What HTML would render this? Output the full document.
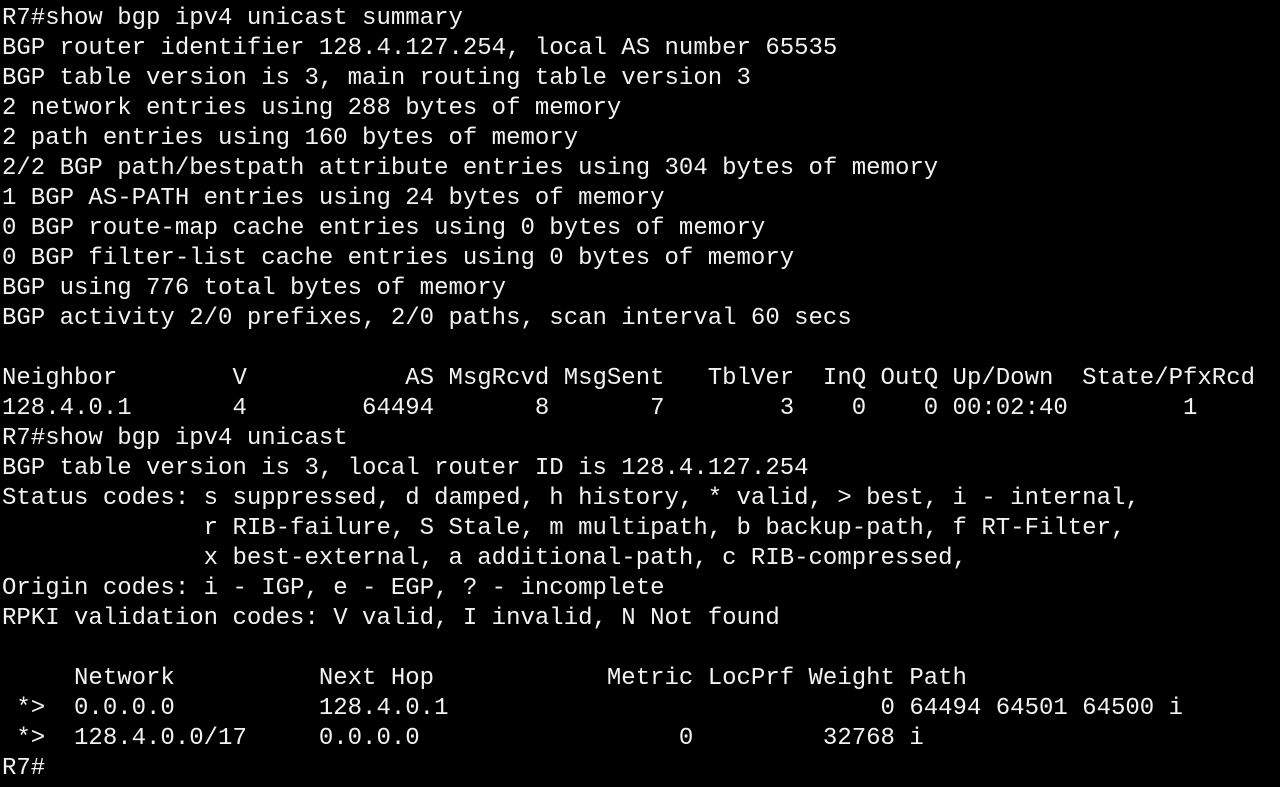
<!DOCTYPE html>
<html><head><meta charset="utf-8"><style>
html,body{margin:0;padding:0;background:#000;width:1280px;height:787px;overflow:hidden}
pre{margin:0;padding:4px 0 0 2px;font-family:"Liberation Mono",monospace;font-size:24px;line-height:30px;color:#f2f2f2;white-space:pre}
</style></head><body><pre>R7#show bgp ipv4 unicast summary
BGP router identifier 128.4.127.254, local AS number 65535
BGP table version is 3, main routing table version 3
2 network entries using 288 bytes of memory
2 path entries using 160 bytes of memory
2/2 BGP path/bestpath attribute entries using 304 bytes of memory
1 BGP AS-PATH entries using 24 bytes of memory
0 BGP route-map cache entries using 0 bytes of memory
0 BGP filter-list cache entries using 0 bytes of memory
BGP using 776 total bytes of memory
BGP activity 2/0 prefixes, 2/0 paths, scan interval 60 secs

Neighbor        V           AS MsgRcvd MsgSent   TblVer  InQ OutQ Up/Down  State/PfxRcd
128.4.0.1       4        64494       8       7        3    0    0 00:02:40        1
R7#show bgp ipv4 unicast
BGP table version is 3, local router ID is 128.4.127.254
Status codes: s suppressed, d damped, h history, * valid, &gt; best, i - internal,
              r RIB-failure, S Stale, m multipath, b backup-path, f RT-Filter,
              x best-external, a additional-path, c RIB-compressed,
Origin codes: i - IGP, e - EGP, ? - incomplete
RPKI validation codes: V valid, I invalid, N Not found

     Network          Next Hop            Metric LocPrf Weight Path
 *&gt;  0.0.0.0          128.4.0.1                              0 64494 64501 64500 i
 *&gt;  128.4.0.0/17     0.0.0.0                  0         32768 i
R7#</pre></body></html>
